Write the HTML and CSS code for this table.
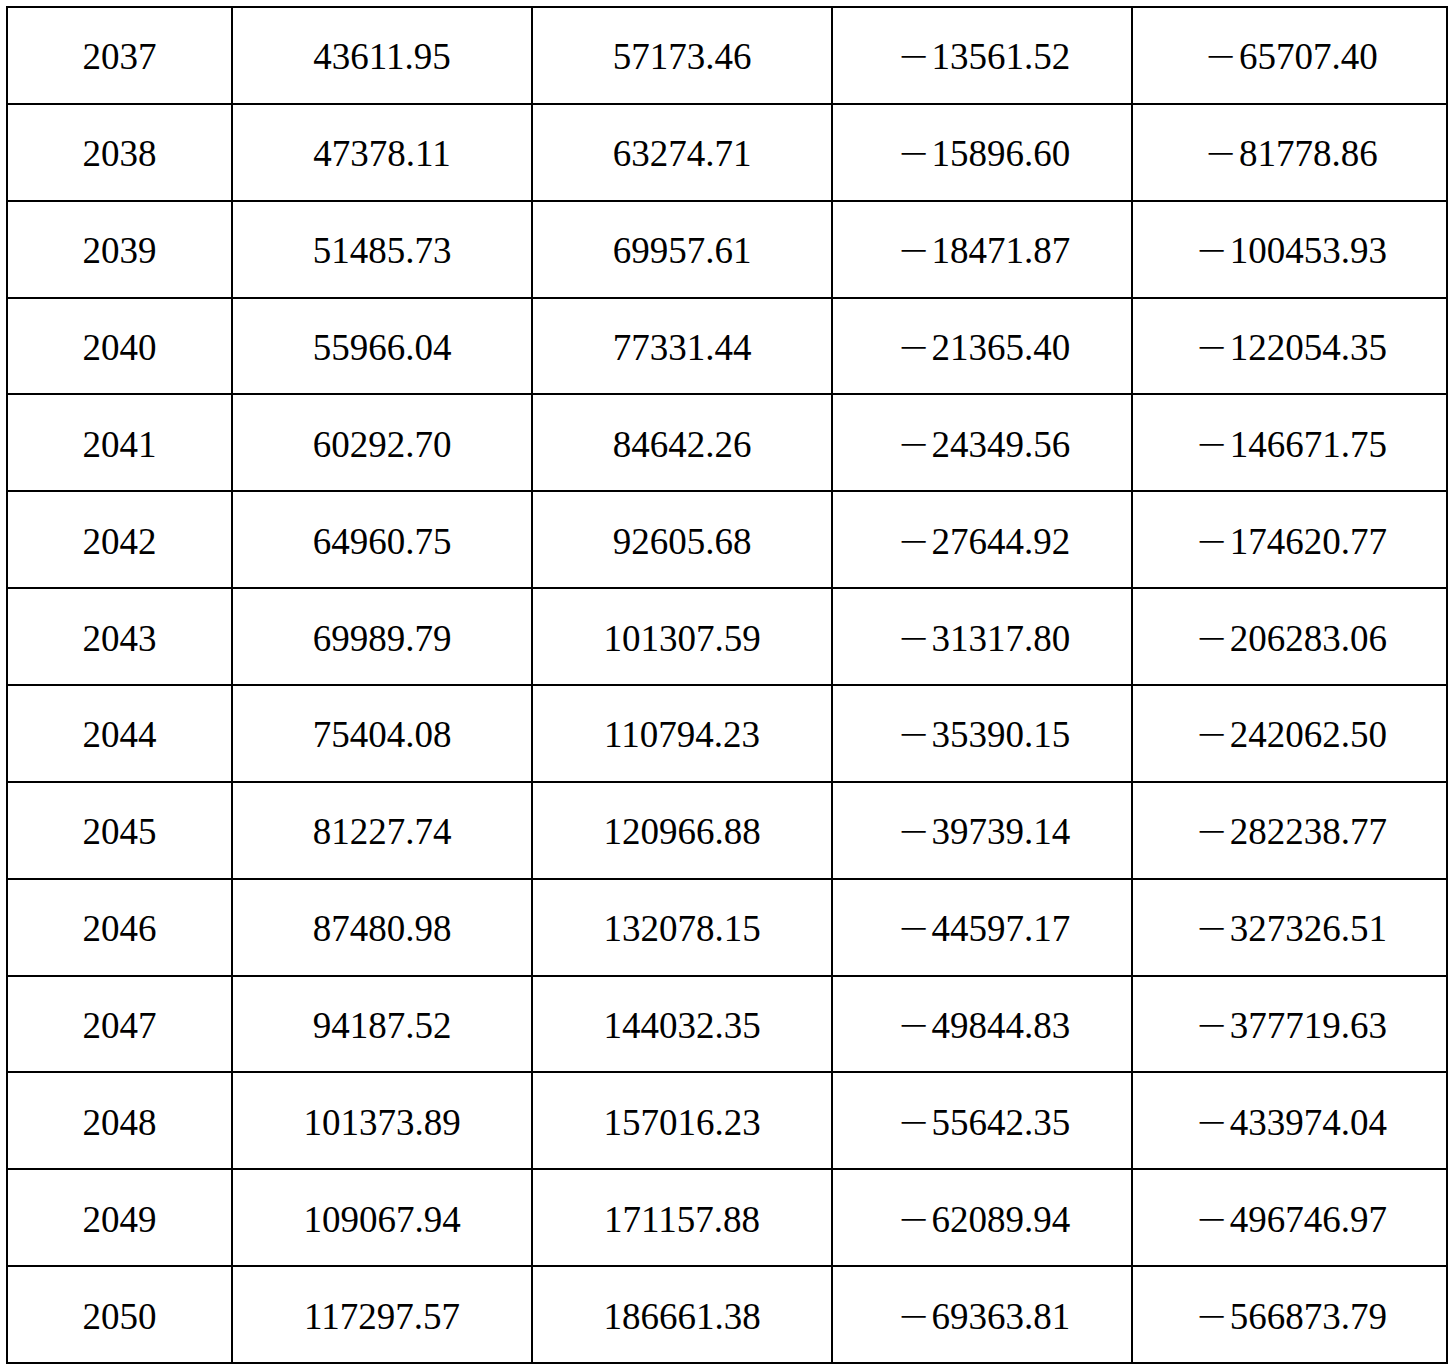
FILE: index.html
```html
<!DOCTYPE html>
<html>
<head>
<meta charset="utf-8">
<link rel="stylesheet" href="styles.css">
</head>
<body>
<table class="data">
<colgroup><col class="c1"><col class="c2"><col class="c3"><col class="c4"><col class="c5"></colgroup>
<tbody>
<tr><td>2037</td><td>43611.95</td><td>57173.46</td><td><span class="minus">−</span>13561.52</td><td><span class="minus">−</span>65707.40</td></tr>
<tr><td>2038</td><td>47378.11</td><td>63274.71</td><td><span class="minus">−</span>15896.60</td><td><span class="minus">−</span>81778.86</td></tr>
<tr><td>2039</td><td>51485.73</td><td>69957.61</td><td><span class="minus">−</span>18471.87</td><td><span class="minus">−</span>100453.93</td></tr>
<tr><td>2040</td><td>55966.04</td><td>77331.44</td><td><span class="minus">−</span>21365.40</td><td><span class="minus">−</span>122054.35</td></tr>
<tr><td>2041</td><td>60292.70</td><td>84642.26</td><td><span class="minus">−</span>24349.56</td><td><span class="minus">−</span>146671.75</td></tr>
<tr><td>2042</td><td>64960.75</td><td>92605.68</td><td><span class="minus">−</span>27644.92</td><td><span class="minus">−</span>174620.77</td></tr>
<tr><td>2043</td><td>69989.79</td><td>101307.59</td><td><span class="minus">−</span>31317.80</td><td><span class="minus">−</span>206283.06</td></tr>
<tr><td>2044</td><td>75404.08</td><td>110794.23</td><td><span class="minus">−</span>35390.15</td><td><span class="minus">−</span>242062.50</td></tr>
<tr><td>2045</td><td>81227.74</td><td>120966.88</td><td><span class="minus">−</span>39739.14</td><td><span class="minus">−</span>282238.77</td></tr>
<tr><td>2046</td><td>87480.98</td><td>132078.15</td><td><span class="minus">−</span>44597.17</td><td><span class="minus">−</span>327326.51</td></tr>
<tr><td>2047</td><td>94187.52</td><td>144032.35</td><td><span class="minus">−</span>49844.83</td><td><span class="minus">−</span>377719.63</td></tr>
<tr><td>2048</td><td>101373.89</td><td>157016.23</td><td><span class="minus">−</span>55642.35</td><td><span class="minus">−</span>433974.04</td></tr>
<tr><td>2049</td><td>109067.94</td><td>171157.88</td><td><span class="minus">−</span>62089.94</td><td><span class="minus">−</span>496746.97</td></tr>
<tr><td>2050</td><td>117297.57</td><td>186661.38</td><td><span class="minus">−</span>69363.81</td><td><span class="minus">−</span>566873.79</td></tr>
</tbody>
</table>
</body>
</html>
```
FILE: styles.css
```css
html, body {
  background: #ffffff;
}
body {
  margin: 6px;
}
.data {
  border-collapse: separate;
  border-spacing: 0;
  table-layout: fixed;
  width: 1442px;
  border-top: 2px solid #000;
  border-left: 2px solid #000;
  font-family: "Liberation Serif", "Times New Roman", serif;
  font-size: 37px;
  color: #000;
}
.c1 { width: 225px; }
.c2, .c3, .c4 { width: 300px; }
.c5 { width: 315px; }
.data td {
  box-sizing: border-box;
  height: 96.86px;
  padding: 3px 0 0 0;
  border-right: 2px solid #000;
  border-bottom: 2px solid #000;
  text-align: center;
  vertical-align: middle;
  white-space: nowrap;
  line-height: normal;
}
.minus {
  display: inline-block;
  transform: scaleX(1.4);
  transform-origin: left center;
  margin-left: 5px;
  margin-right: 12px;
}
```
